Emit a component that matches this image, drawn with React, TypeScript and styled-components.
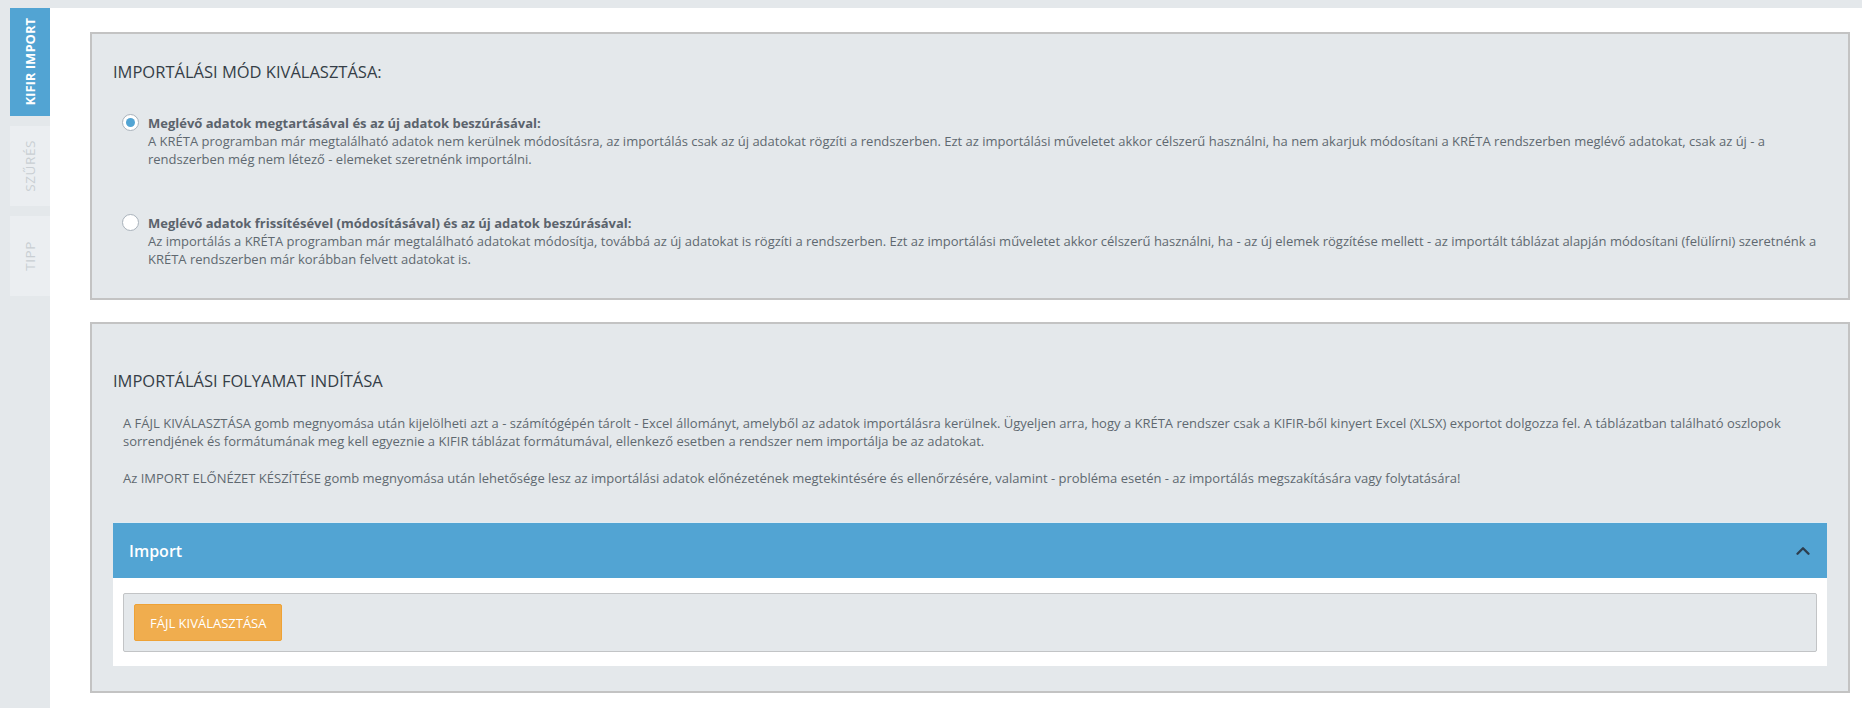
import styled, { createGlobalStyle } from 'styled-components';
import { ChevronUp } from 'lucide-react';

const GlobalStyle = createGlobalStyle`
    html, body {
        margin: 0;
        padding: 0;
        background: #e4e8eb;
        font-family: "Open Sans", "Liberation Sans", Arial, sans-serif;
    }
    * {
        box-sizing: border-box;
    }
`

interface IOption {
    title: string
    text: string
    checked: boolean
}

const options: IOption[] = [
    {
        title: "Meglévő adatok megtartásával és az új adatok beszúrásával:",
        text: "A KRÉTA programban már megtalálható adatok nem kerülnek módosításra, az importálás csak az új adatokat rögzíti a rendszerben. Ezt az importálási műveletet akkor célszerű használni, ha nem akarjuk módosítani a KRÉTA rendszerben meglévő adatokat, csak az új - a rendszerben még nem létező - elemeket szeretnénk importálni.",
        checked: true,
    },
    {
        title: "Meglévő adatok frissítésével (módosításával) és az új adatok beszúrásával:",
        text: "Az importálás a KRÉTA programban már megtalálható adatokat módosítja, továbbá az új adatokat is rögzíti a rendszerben. Ezt az importálási műveletet akkor célszerű használni, ha - az új elemek rögzítése mellett - az importált táblázat alapján módosítani (felülírni) szeretnénk a KRÉTA rendszerben már korábban felvett adatokat is.",
        checked: false,
    },
]

const tabs = ["KIFIR IMPORT", "SZŰRÉS", "TIPP"]

const App = () => {
    return (
        <>
            <GlobalStyle />
            <Page>
                <SideBar>
                    {tabs.map((tab, index) =>
                        <SideTab key={tab} active={index === 0}>
                            <SideTabLabel>{tab}</SideTabLabel>
                        </SideTab>
                    )}
                </SideBar>

                <Content>
                    <Panel>
                        <PanelTitle>IMPORTÁLÁSI MÓD KIVÁLASZTÁSA:</PanelTitle>
                        <OptionList>
                            {options.map((option, index) =>
                                <Option key={index}>
                                    <Radio checked={option.checked} />
                                    <div>
                                        <OptionTitle>{option.title}</OptionTitle>
                                        <OptionText>{option.text}</OptionText>
                                    </div>
                                </Option>
                            )}
                        </OptionList>
                    </Panel>

                    <Panel start>
                        <PanelTitle>IMPORTÁLÁSI FOLYAMAT INDÍTÁSA</PanelTitle>
                        <Info>
                            A FÁJL KIVÁLASZTÁSA gomb megnyomása után kijelölheti azt a - számítógépén tárolt - Excel állományt, amelyből az adatok importálásra kerülnek. Ügyeljen arra, hogy a KRÉTA rendszer csak a KIFIR-ből kinyert Excel (XLSX) exportot dolgozza fel. A táblázatban található oszlopok sorrendjének és formátumának meg kell egyeznie a KIFIR táblázat formátumával, ellenkező esetben a rendszer nem importálja be az adatokat.
                        </Info>
                        <Info>
                            Az IMPORT ELŐNÉZET KÉSZÍTÉSE gomb megnyomása után lehetősége lesz az importálási adatok előnézetének megtekintésére és ellenőrzésére, valamint - probléma esetén - az importálás megszakítására vagy folytatására!
                        </Info>

                        <ImportCard>
                            <ImportHeader>
                                <ImportTitle>Import</ImportTitle>
                                <ChevronUp size={22} strokeWidth={2.6} color="#2d3e4f" />
                            </ImportHeader>
                            <ImportBody>
                                <UploadBox>
                                    <FileButton>FÁJL KIVÁLASZTÁSA</FileButton>
                                </UploadBox>
                            </ImportBody>
                        </ImportCard>
                    </Panel>
                </Content>
            </Page>
        </>
    )
}

const Page = styled.div`
    display: flex;
    padding-top: 8px;
    min-height: 708px;
`

const SideBar = styled.div`
    width: 50px;
    flex-shrink: 0;
    padding-left: 10px;
    display: flex;
    flex-direction: column;
    gap: 10px;
`

interface SideTabProps {
    active: boolean
}

const SideTab = styled.div<SideTabProps>`
    display: flex;
    align-items: center;
    justify-content: center;
    min-height: 80px;
    padding: 10px 0;
    background: #ebeef1;
    color: #c9ced3;
    font-size: 13.5px;
    letter-spacing: 0.6px;
    cursor: pointer;

    ${({ active }) => active && `
        background: #52a4d3;
        color: #ffffff;
        font-size: 13px;
        font-weight: 700;
        letter-spacing: 0;
    `}
`

const SideTabLabel = styled.span`
    writing-mode: vertical-rl;
    transform: rotate(180deg);
    white-space: nowrap;
    line-height: 16px;
`

const Content = styled.div`
    flex: 1;
    background: #ffffff;
    padding: 24px 12px 16px 40px;
    display: flex;
    flex-direction: column;
    gap: 22px;
`

interface PanelProps {
    start?: boolean
}

const Panel = styled.div<PanelProps>`
    background: #e4e8eb;
    border: 2px solid #c3c3c3;
    padding: ${({ start }) => start ? '46px 21px 25px' : '27px 21px 30px'};
`

const PanelTitle = styled.h2`
    margin: 0;
    font-size: 16.5px;
    line-height: 22px;
    font-weight: 400;
    color: #353e47;
`

const OptionList = styled.div`
    display: flex;
    flex-direction: column;
    gap: 46px;
    margin-top: 31px;
    padding-left: 9px;
`

const Option = styled.div`
    display: flex;
    align-items: flex-start;
    gap: 9px;
`

interface RadioProps {
    checked: boolean
}

const Radio = styled.span<RadioProps>`
    flex-shrink: 0;
    position: relative;
    width: 17px;
    height: 17px;
    border-radius: 50%;
    border: 1px solid #a9b2bb;
    background: #ffffff;

    ${({ checked }) => checked && `
        &:after {
            content: '';
            position: absolute;
            top: 3px;
            left: 3px;
            width: 9px;
            height: 9px;
            border-radius: 50%;
            background: #52a4d3;
        }
    `}
`

const OptionTitle = styled.div`
    font-size: 13px;
    line-height: 18px;
    font-weight: 700;
    color: #5b636c;
`

const OptionText = styled.div`
    font-size: 13px;
    line-height: 18px;
    color: #5f6870;
`

const Info = styled.p`
    margin: 22px 0 0;
    padding-left: 10px;
    font-size: 13px;
    line-height: 18px;
    color: #5f6870;

    & + & {
        margin-top: 19px;
    }
`

const ImportCard = styled.div`
    margin-top: 35px;
    background: #ffffff;
`

const ImportHeader = styled.div`
    display: flex;
    align-items: center;
    justify-content: space-between;
    height: 56px;
    padding: 0 13px 0 16px;
    background: #52a4d3;
    border-top: 1px solid #e0ecf3;
`

const ImportTitle = styled.span`
    font-size: 16px;
    font-weight: 600;
    color: #ffffff;
`

const ImportBody = styled.div`
    padding: 15px 10px 14px;
`

const UploadBox = styled.div`
    display: flex;
    padding: 10px;
    background: #e4e8eb;
    border: 1px solid #c2c4c6;
    border-radius: 2px;
`

const FileButton = styled.button`
    height: 37px;
    padding: 0 15px;
    background: #f0ad4e;
    border: 1px solid #eea236;
    border-radius: 2px;
    color: #ffffff;
    font-family: inherit;
    font-size: 13px;
    cursor: pointer;
`

export default App
